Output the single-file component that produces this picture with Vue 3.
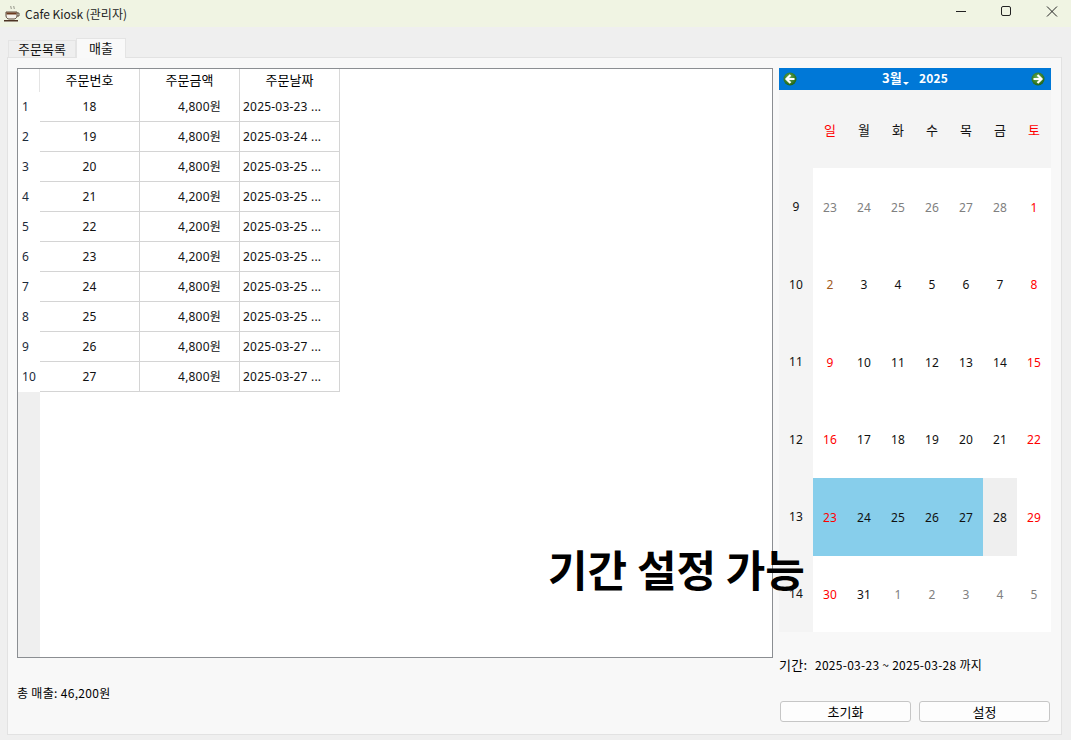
<script setup>
const rows = [
  [1, 18, '4,800원', '2025-03-23 ...'],
  [2, 19, '4,800원', '2025-03-24 ...'],
  [3, 20, '4,800원', '2025-03-25 ...'],
  [4, 21, '4,200원', '2025-03-25 ...'],
  [5, 22, '4,200원', '2025-03-25 ...'],
  [6, 23, '4,200원', '2025-03-25 ...'],
  [7, 24, '4,800원', '2025-03-25 ...'],
  [8, 25, '4,800원', '2025-03-25 ...'],
  [9, 26, '4,800원', '2025-03-27 ...'],
  [10, 27, '4,800원', '2025-03-27 ...'],
]
const heads = [
  { t: '일', c: 'red' }, { t: '월' }, { t: '화' }, { t: '수' }, { t: '목' }, { t: '금' }, { t: '토', c: 'red' },
]
const weeks = [
  { n: 9, d: [[23,'o'],[24,'o'],[25,'o'],[26,'o'],[27,'o'],[28,'o'],[1,'red o1']] },
  { n: 10, d: [[2,'mix'],[3,''],[4,''],[5,''],[6,''],[7,''],[8,'red']] },
  { n: 11, d: [[9,'red'],[10,''],[11,''],[12,''],[13,''],[14,''],[15,'red']] },
  { n: 12, d: [[16,'red'],[17,''],[18,''],[19,''],[20,''],[21,''],[22,'red']] },
  { n: 13, d: [[23,'red sel'],[24,'sel'],[25,'sel'],[26,'sel'],[27,'sel'],[28,'today'],[29,'red']] },
  { n: 14, d: [[30,'red'],[31,''],[1,'o'],[2,'o'],[3,'o'],[4,'o'],[5,'o']] },
]
</script>

<template>
  <div class="window">
    <header class="titlebar">
      <svg class="appicon" width="18" height="18" viewBox="0 0 18 18">
        <path d="M8 1c-1 1 1 2 0 3M11 1c-1 1 1 2 0 3" fill="none" stroke="#8a8a80" stroke-width="1" />
        <path d="M3 7h11v4c0 2-2 3-3 3H6c-1 0-3-1-3-3z" fill="#f4f1ea" stroke="#5b4a3a" stroke-width="1" />
        <path d="M3.500 7.500h10v2h-10z" fill="#6b3a1e" />
        <path d="M14 8h2v3h-2" fill="none" stroke="#5b4a3a" stroke-width="1" />
        <path d="M1 15h14v1.500H1z" fill="#4d3424" />
      </svg>
      <span class="apptitle">Cafe Kiosk (관리자)</span>
      <div class="winctl">
        <svg width="12" height="12" viewBox="0 0 12 12"><path d="M0 5.500h10" stroke="#222" stroke-width="1" /></svg>
        <svg width="12" height="12" viewBox="0 0 12 12"><rect x="0.500" y="0.500" width="9" height="9" rx="1.500" fill="none" stroke="#222" /></svg>
        <svg width="12" height="12" viewBox="0 0 12 12"><path d="M1 0.500l10 10M11 0.500L1 10.500" stroke="#222" stroke-width="1" /></svg>
      </div>
    </header>

    <div class="body">
      <div class="tabs">
        <div class="tab">주문목록</div>
        <div class="tab active">매출</div>
      </div>
      <div class="pane">
        <div class="left">
          <div class="table">
            <div class="rowhead">
              <div class="corner"></div>
              <div v-for="r in rows" :key="r[0]" class="rh">{{ r[0] }}</div>
              <div class="rh-rest"></div>
            </div>
            <div class="cols">
              <div class="thead">
                <div class="th">주문번호</div>
                <div class="th">주문금액</div>
                <div class="th">주문날짜</div>
              </div>
              <div v-for="r in rows" :key="r[0]" class="tr">
                <div class="td center">{{ r[1] }}</div>
                <div class="td amount">{{ r[2] }}</div>
                <div class="td date">{{ r[3] }}</div>
              </div>
            </div>
          </div>
          <div class="total">총 매출: 46,200원</div>
        </div>

        <div class="side">
          <div class="calendar">
            <div class="nav">
              <svg class="arrow" width="14" height="14" viewBox="0 0 14 14">
                <defs>
                  <radialGradient id="orb" cx="45%" cy="40%" r="60%">
                    <stop offset="0%" stop-color="#6fb25a" />
                    <stop offset="100%" stop-color="#1f6414" />
                  </radialGradient>
                </defs>
                <circle cx="7" cy="7" r="6.500" fill="url(#orb)" />
                <path d="M11.500 7H4.500M7.500 3L3.500 7l4 4" fill="none" stroke="#fff" stroke-width="2.200" />
              </svg>
              <div class="month">
                <span>3월</span><span class="caret"></span><span class="year">2025</span>
              </div>
              <svg class="arrow" width="14" height="14" viewBox="0 0 14 14">
                <circle cx="7" cy="7" r="6.500" fill="url(#orb)" />
                <path d="M2.500 7h7M6.500 3l4 4-4 4" fill="none" stroke="#fff" stroke-width="2.200" />
              </svg>
            </div>
            <div class="grid headrow">
              <div class="wk"></div>
              <div v-for="h in heads" :key="h.t" class="cell hd" :class="h.c">{{ h.t }}</div>
            </div>
            <div v-for="w in weeks" :key="w.n" class="grid week">
              <div class="wk cell">{{ w.n }}</div>
              <div v-for="d in w.d" :key="d[0] + d[1]" class="cell day" :class="d[1]">{{ d[0] }}</div>
            </div>
          </div>
          <div class="period"><span class="plabel">기간:</span>2025-03-23 ~ 2025-03-28 까지</div>
          <div class="buttons">
            <button class="btn">초기화</button>
            <button class="btn">설정</button>
          </div>
        </div>

        <div class="overlay">기간 설정 가능</div>
      </div>
    </div>
  </div>
</template>

<style scoped>
.window {
  width: 1071px;
  height: 740px;
  display: flex;
  flex-direction: column;
  background: #efefef;
  font-family: "Noto Sans CJK KR", "Liberation Sans", sans-serif;
  font-size: 12px;
  color: #000;
  overflow: hidden;
}
.titlebar {
  height: 27px;
  flex: none;
  background: #f0f4e3;
  display: flex;
  align-items: center;
  padding-left: 3px;
}
.appicon { margin-right: 4px; }
.apptitle { font-size: 12px; color: #222; }
.winctl {
  margin-left: auto;
  display: flex;
  gap: 33px;
  padding-right: 13px;
  padding-bottom: 3px;
}
.body {
  flex: 1;
  display: flex;
  flex-direction: column;
  padding: 11px 9px 5px 7px;
  min-height: 0;
}
.tabs {
  display: flex;
  height: 19px;
  flex: none;
  align-items: flex-end;
  padding-left: 1px;
}
.tab {
  height: 17px;
  width: 68px;
  box-sizing: border-box;
  border: 1px solid #e4e4e4;
  border-bottom: none;
  text-align: center;
  line-height: 15px;
  color: #111;
  font-size: 13px;
}
.tab.active {
  height: 20px;
  width: 50px;
  line-height: 18px;
  background: #f9f9f9;
  position: relative;
  z-index: 1;
  margin-bottom: -1px;
}
.pane {
  flex: 1;
  position: relative;
  display: flex;
  gap: 6px;
  background: #f8f8f8;
  border: 1px solid #e2e2e2;
  padding: 10px 10px 0 9px;
  min-height: 0;
}
.left {
  width: 756px;
  flex: none;
  display: flex;
  flex-direction: column;
}
.table {
  height: 590px;
  flex: none;
  box-sizing: border-box;
  border: 1px solid #8b8e92;
  background: #fff;
  display: flex;
}
.rowhead {
  width: 22px;
  flex: none;
  display: flex;
  flex-direction: column;
}
.corner { height: 23px; background: #fff; flex: none; border-right: 1px solid #e4e4e4; box-sizing: border-box; }
.rh {
  height: 30px;
  flex: none;
  box-sizing: border-box;
  padding-left: 4px;
  line-height: 30px;
  font-size: 12px;
  letter-spacing: .2px;
  color: #1c2a3a;
  font-family: "Noto Sans", sans-serif;
}
.rh-rest { flex: 1; background: #efefef; }
.cols { flex: 1; min-width: 0; }
.thead { display: flex; height: 23px; }
.th {
  width: 100px;
  box-sizing: border-box;
  border-right: 1px solid #d8d8d8;
  text-align: center;
  line-height: 21px;
  font-size: 13px;
}
.tr { display: flex; height: 30px; }
.td {
  width: 100px;
  box-sizing: border-box;
  border-right: 1px solid #d4d4d4;
  border-bottom: 1px solid #d4d4d4;
  line-height: 29px;
  font-size: 12px;
  letter-spacing: .2px;
  color: #111;
  font-family: "Noto Sans", "Noto Sans CJK KR", sans-serif;
  white-space: nowrap;
  overflow: hidden;
}
.td.center { text-align: center; }
.td.amount { text-align: right; padding-right: 18px; }
.td.date { padding-left: 3px; }
.total {
  margin-top: 26px;
  font-size: 12px;
  line-height: 18px;
  letter-spacing: .32px;
}
.side {
  width: 272px;
  flex: none;
  display: flex;
  flex-direction: column;
}
.calendar { height: 564px; flex: none; }
.nav {
  height: 22px;
  background: #0078d7;
  display: flex;
  align-items: center;
  justify-content: space-between;
  padding: 0 6px 0 4px;
  color: #fff;
}
.month {
  font-weight: 700;
  font-size: 12px;
  line-height: 18px;
  display: flex;
  align-items: center;
  margin: -3px 0 0 2px;
  letter-spacing: .2px;
}
.month span:first-child { font-size: 13px; }
.caret {
  width: 0;
  height: 0;
  margin: 14px 0 0 1px;
  border: 3px solid transparent;
  border-top-color: #fff;
}
.year { margin-left: 10px; }
.arrow { flex: none; }
.grid {
  display: grid;
  grid-template-columns: repeat(8, 34px);
}
.headrow {
  height: 78px;
  background: #f4f4f4;
}
.week {
  height: 77.5px;
  background: #fff;
}
.week:last-child { height: 76.5px; }
.cell {
  display: flex;
  align-items: center;
  justify-content: center;
  font-size: 12px;
  letter-spacing: .2px;
  color: #111;
  font-family: "Noto Sans", "Noto Sans CJK KR", sans-serif;
}
.hd { font-size: 13px; font-family: "Noto Sans CJK KR", sans-serif; }
.wk { background: #f4f4f4; }
.day { padding-top: 1px; box-sizing: border-box; }
.cell.red { color: #f00; }
.cell.mix { color: #a05a20; }
.cell.o { color: #808080; }
.sel { background: #87ceeb; }
.today { background: #efefef; }
.period {
  margin-top: 24px;
  font-size: 12px;
  line-height: 18px;
  letter-spacing: .27px;
  display: flex;
}
.plabel { width: 36px; flex: none; font-size: 13px; }
.buttons {
  margin-top: 27px;
  display: flex;
  gap: 8px;
  padding-left: 1px;
}
.btn {
  width: 131px;
  height: 21px;
  box-sizing: border-box;
  background: #fdfdfd;
  border: 1px solid #c6c6c6;
  border-radius: 3px;
  font: inherit;
  font-size: 13px;
  color: #000;
  padding: 0;
  line-height: 18px;
}
.overlay {
  position: absolute;
  left: 540px;
  top: 479px;
  font-size: 43px;
  font-weight: 700;
  line-height: 62px;
  white-space: nowrap;
  color: #000;
}
</style>
